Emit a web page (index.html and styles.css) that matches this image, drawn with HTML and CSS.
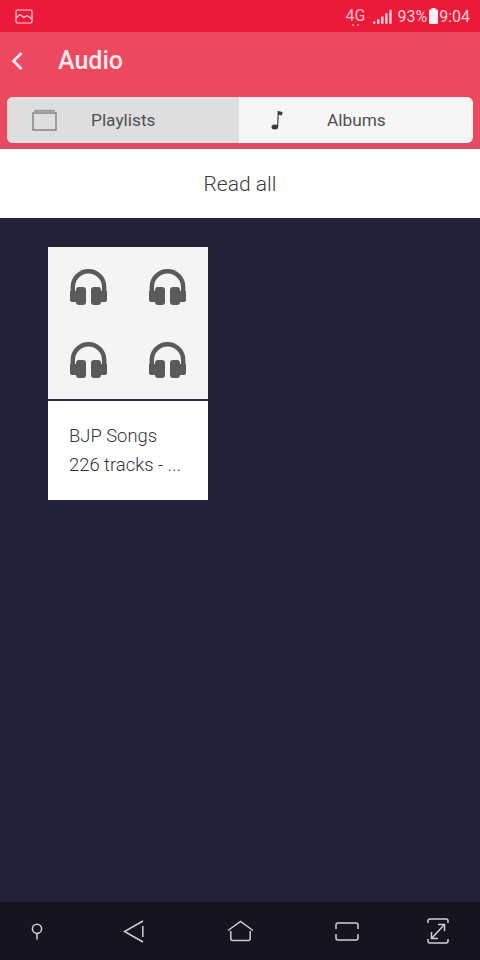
FILE: index.html
```html
<!DOCTYPE html>
<html lang="en">
<head>
  <meta charset="UTF-8" />
  <meta name="viewport" content="width=device-width, initial-scale=1.0" />
  <title>Audio</title>
  <link rel="stylesheet" href="styles.css">
</head>
<body>

<div class="phone">
  <!-- Status bar -->
  <div class="status-bar">
    <svg class="gallery-icon" width="18" height="15" viewBox="0 0 18 15" fill="none" stroke="currentColor" stroke-width="1.2">
      <rect x="1" y="1" width="16" height="13" rx="1.5" />
      <path d="M1 9 L5 5.5 L9 8.5 L12 6.5 L17 10" />
    </svg>
    <div class="status-right">
      <div class="net">
        <span>4G</span>
        <div class="net-dots"><i></i><i></i></div>
      </div>
      <svg class="signal" width="19" height="16" viewBox="0 0 21 16" fill="currentColor">
        <rect x="0" y="13" width="2.600" height="2.500" />
        <rect x="4.500" y="10.500" width="2.600" height="5" />
        <rect x="9" y="7.500" width="2.600" height="8" />
        <rect x="13.500" y="4" width="2.600" height="11.500" />
        <rect x="18" y="0" width="2.600" height="15.500" />
      </svg>
      <span class="pct">93%</span>
      <svg class="battery" width="9" height="16" viewBox="0 0 9 16" fill="currentColor">
        <rect x="2.500" y="0" width="4" height="2" />
        <rect x="0" y="1.500" width="9" height="14.500" rx="1" />
      </svg>
      <span class="clock">9:04</span>
    </div>
  </div>

  <!-- Header with tabs -->
  <div class="header">
    <div class="title-row">
      <svg class="back" width="14" height="20" viewBox="0 0 14 20" fill="none" stroke="currentColor" stroke-width="2.800">
        <path d="M11.500 2 L3.500 10 L11.500 18" />
      </svg>
      <h1>Audio</h1>
    </div>
    <div class="tabs">
      <div class="tab tab-active">
        <svg class="tab-icon-folder" width="25" height="22" viewBox="0 0 25 22" fill="none" stroke="#77777a" stroke-width="1.300">
          <rect x="1" y="4" width="23" height="17" />
          <path d="M3 1.500 H22 V4 H3 Z" fill="#a9a9ab" stroke="#9a9a9c" />
        </svg>
        <span class="tab-label">Playlists</span>
      </div>
      <div class="tab">
        <svg class="tab-icon-note" width="12" height="20" viewBox="0 0 12 20" fill="#3a3a3c">
          <ellipse cx="3.800" cy="17" rx="3.300" ry="2.500" />
          <path d="M6 17 L6.800 1 H8 L7.200 17 Z" />
          <path d="M6.800 1 L11.500 2 L11 5.500 L6.800 4.500 Z" />
        </svg>
        <span class="tab-label">Albums</span>
      </div>
    </div>
  </div>

  <div class="read-all">Read all</div>

  <!-- Playlist grid -->
  <div class="content">
    <div class="card">
      <div class="cover">
        <svg class="headphones" viewBox="0 0 37 36"><use href="#hp" /></svg>
        <svg class="headphones" viewBox="0 0 37 36"><use href="#hp" /></svg>
        <svg class="headphones" viewBox="0 0 37 36"><use href="#hp" /></svg>
        <svg class="headphones" viewBox="0 0 37 36"><use href="#hp" /></svg>
      </div>
      <div class="card-text">
        <div>BJP Songs</div>
        <div>226 tracks - ...</div>
      </div>
    </div>
  </div>

  <!-- Navigation bar -->
  <div class="nav-bar">
    <svg width="12" height="17" viewBox="0 0 12 17" fill="none" stroke="currentColor" stroke-width="1.500">
      <circle cx="6" cy="5.800" r="4.600" />
      <path d="M6 10.500 V16.500" />
    </svg>
    <svg width="21" height="23" viewBox="0 0 21 23" fill="none" stroke="currentColor" stroke-width="1.500">
      <path d="M20 1 L1.500 11.500 L20 22" />
      <path d="M19.800 6 V17" />
    </svg>
    <svg width="27" height="22" viewBox="0 0 27 22" fill="none" stroke="currentColor" stroke-width="1.500">
      <path d="M1 10.500 L13.500 1.500 L26 10.500" />
      <path d="M3.800 11 V18.500 Q3.800 20.500 5.800 20.500 H21.200 Q23.200 20.500 23.200 18.500 V11" />
    </svg>
    <svg width="24" height="19" viewBox="0 0 24 19" fill="none" stroke="currentColor" stroke-width="1.500">
      <path d="M1 7 V3 Q1 1 3 1 H21 Q23 1 23 3 V7" />
      <path d="M1 12 V16 Q1 18 3 18 H21 Q23 18 23 16 V12" />
    </svg>
    <svg width="22" height="26" viewBox="0 0 22 26" fill="none" stroke="currentColor" stroke-width="1.500">
      <path d="M1 5 V3 Q1 1 3 1 H19 Q21 1 21 3 V5" />
      <path d="M1 21 V23 Q1 25 3 25 H19 Q21 25 21 23 V21" />
      <path d="M5 20 L17 7" />
      <path d="M11 6.500 H17.500 V13" />
      <path d="M4.500 14 V20.500 H11" />
    </svg>
  </div>
</div>

<svg class="defs" width="0" height="0">
  <defs>
    <g id="hp">
      <path d="M2.800 24 V18 A15.700 15.700 0 0 1 34.200 18 V24" fill="none" stroke="#5a5a5c" stroke-width="4.400" />
      <path d="M0 22 H6 V33 H3 Q0 33 0 31 Z" fill="#5a5a5c" />
      <path d="M37 22 H31 V33 H34 Q37 33 37 31 Z" fill="#5a5a5c" />
      <rect x="6" y="18" width="10" height="18" rx="3" fill="#5a5a5c" />
      <rect x="21" y="18" width="10" height="18" rx="3" fill="#5a5a5c" />
    </g>
  </defs>
</svg>

</body>
</html>
```

FILE: styles.css
```css
* { margin: 0; padding: 0; box-sizing: border-box; }
html, body {
  height: 100%;
  font-family: Roboto, "Liberation Sans", sans-serif;
  background: #24223a;
}

.phone {
  height: 960px;
  display: flex;
  flex-direction: column;
}

.defs { position: absolute; }

.status-bar {
  height: 32px;
  background: #eb1a3a;
  color: #fbd0d7;
  display: flex;
  align-items: center;
  justify-content: space-between;
  padding: 0 10px 0 15px;
}

.status-right {
  display: flex;
  align-items: center;
  font-size: 16px;
}

.net {
  display: flex;
  flex-direction: column;
  align-items: center;
  margin-right: 8px;
  font-size: 16px;
  line-height: 15px;
  padding-top: 3px;
  color: #f9b9c4;
}

.net-dots {
  display: flex;
  gap: 3px;
  height: 3px;
  margin-top: 1px;
}

.net-dots i {
  width: 2px;
  height: 2px;
  background: #f77d91;
}

.signal { margin-right: 5px; margin-top: 1px; }
.pct { margin-right: 2px; }
.battery { margin-right: 1px; color: #fdf1f2; }

.header {
  height: 117px;
  background: linear-gradient(#ec4961 0, #ec4961 110px, #de4e67 111px);
  color: #fde6e9;
  padding-top: 12px;
}

.title-row {
  height: 33px;
  display: flex;
  align-items: center;
  padding-left: 10px;
}

.back { margin-right: 34px; }

h1 { font-size: 25px; font-weight: 500; }

.tabs {
  display: flex;
  height: 46px;
  margin: 20px 7px 0;
  background: #f6f6f7;
  border-radius: 6px;
  overflow: hidden;
}

.tab {
  flex: 1;
  display: flex;
  align-items: center;
  color: #505054;
  font-size: 17.300px;
}

.tab-active { flex: 0 0 232px; background: #dddedd; }

.tab-icon-folder { margin-left: 25px; margin-right: 34px; }
.tab-icon-note { margin-left: 32px; margin-right: 44px; }

.read-all {
  height: 69px;
  background: #fff;
  color: #3c3c3e;
  font-size: 21px;
  font-weight: 300;
  display: flex;
  align-items: center;
  justify-content: center;
}

.content {
  flex: 1;
  padding: 29px 48px 0;
}

.card {
  width: 160px;
  height: 253px;
  background: #fff;
}

.cover {
  height: 154px;
  background: #f4f4f4;
  border-bottom: 2px solid #2c2a3a;
  display: grid;
  grid-template-columns: repeat(2, 37px);
  grid-template-rows: repeat(2, 36px);
  justify-content: space-between;
  row-gap: 37px;
  padding: 22px 22px 0 21.500px;
}

.card-text {
  padding: 20px 21px 0;
  font-size: 18.400px;
  font-weight: 300;
  line-height: 29px;
  color: #333338;
}

/* columns are not even on the real device */
.nav-bar {
  height: 58px;
  background: #16141f;
  color: #cfcfd4;
  display: grid;
  grid-template-columns: 74px 118px 96px 118px 64px;
  justify-items: center;
  align-items: center;
}
```
